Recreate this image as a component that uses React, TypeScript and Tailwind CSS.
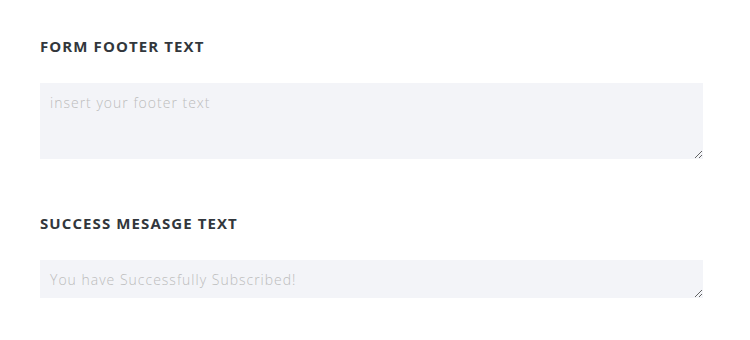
import React from 'react'

const fields = [
  { label: 'Form Footer Text', placeholder: 'insert your footer text', height: 'h-[76px]' },
  { label: 'Success Mesasge Text', placeholder: 'You have Successfully Subscribed!', height: 'h-[38px]' },
]

export default function App() {
  return (
    <main
      className="min-h-[340px] bg-white pt-[36px] pl-10 pr-[47px]"
      style={{ fontFamily: '"Open Sans", sans-serif' }}
    >
      <div className="flex flex-col gap-[54px]">
        {fields.map((f) => (
          <div key={f.label} className="flex flex-col gap-[27px]">
            <h2 className="text-[15px] leading-5 font-bold uppercase tracking-[1.1px] text-[#32373c]">
              {f.label}
            </h2>
            <textarea
              placeholder={f.placeholder}
              className={`w-full ${f.height} resize-y bg-[#f3f4f8] px-[10px] pt-[10px] pb-[8px] text-[14px] leading-[20px] font-light tracking-[1px] text-[#32373c] placeholder:text-[#bcbcbc] outline-none`}
            />
          </div>
        ))}
      </div>
    </main>
  )
}
